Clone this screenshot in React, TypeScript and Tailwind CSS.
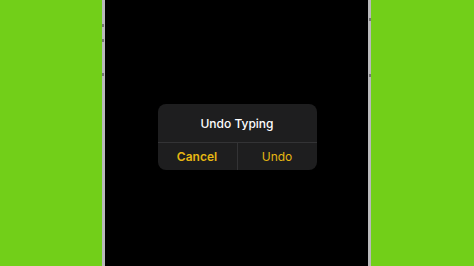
export default function App() {
  return (
    <div className="flex h-[266px] w-[474px] overflow-hidden bg-[#72cf19]" style={{ fontFamily: "Inter, 'Noto Sans', sans-serif" }}>
      <div className="w-[102px] shrink-0" />
      <div className="relative flex w-[269px] shrink-0 border-x-[3px] border-[#b9b9bb] bg-black">
        <span className="absolute -left-[3px] top-[24px] h-[3px] w-[2px] bg-[#777]" />
        <span className="absolute -left-[3px] top-[39px] h-[3px] w-[2px] bg-[#777]" />
        <span className="absolute -left-[3px] top-[73px] h-[3px] w-[2px] bg-[#777]" />
        <span className="absolute -right-[3px] top-[18px] h-[3px] w-[2px] bg-[#777]" />
        <span className="absolute -right-[3px] top-[74px] h-[3px] w-[2px] bg-[#777]" />
        <div className="flex flex-1 justify-center pt-[104px] pl-[1px]">
          <div className="flex h-[66px] w-[159px] flex-col rounded-[8px] bg-[#1e1e1f]">
            <div className="flex h-[39px] items-center justify-center border-b border-[#333335] pt-[2px] text-[12px] font-medium text-white">
              Undo Typing
            </div>
            <div className="flex flex-1 text-[12px] text-[#e6b712]">
              <div className="flex flex-1 items-center justify-center border-r border-[#333335] font-semibold">Cancel</div>
              <div className="flex flex-1 items-center justify-center">Undo</div>
            </div>
          </div>
        </div>
      </div>
      <div className="flex-1" />
    </div>
  );
}
